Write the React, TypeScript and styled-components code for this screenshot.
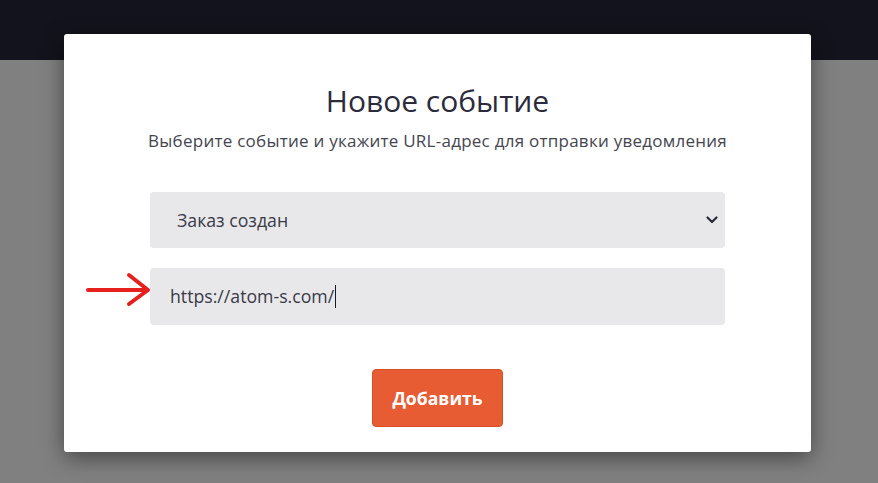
import React from "react";
import styled, { createGlobalStyle } from "styled-components";

const Global = createGlobalStyle`
  html, body { margin: 0; padding: 0; }
  body { font-family: "Open Sans", "Noto Sans", sans-serif; background: #808080; }
  * { box-sizing: border-box; }
`;

const Page = styled.div`
  position: relative;
  width: 878px;
  height: 483px;
  overflow: hidden;
  display: flex;
  flex-direction: column;
  background: #808080;
`;

const TopBar = styled.div`
  height: 60px;
  background: #12131c;
  flex-shrink: 0;
`;

const Overlay = styled.div`
  flex: 1;
  background: #808080;
`;

const Modal = styled.div`
  position: absolute;
  left: 64px;
  top: 34px;
  width: 747px;
  height: 418px;
  background: #ffffff;
  border-radius: 3px;
  box-shadow: 0 6px 22px rgba(0, 0, 0, 0.45);
  display: flex;
  flex-direction: column;
  align-items: center;
  padding-top: 49px;
`;

const Title = styled.h2`
  margin: 0;
  font-size: 30px;
  line-height: 36px;
  font-weight: 400;
  color: #2b2b3c;
`;

const Subtitle = styled.p`
  margin: 11px 0 0;
  font-size: 17px;
  letter-spacing: 0.25px;
  line-height: 22px;
  color: #45454f;
`;

const Form = styled.div`
  margin-top: 40px;
  width: 575px;
  display: flex;
  flex-direction: column;
  gap: 20px;
`;

const Field = styled.div<{ $h: number; $pl: number }>`
  position: relative;
  height: ${(p) => p.$h}px;
  background: #e8e8ea;
  border-radius: 4px;
  display: flex;
  align-items: center;
  padding-left: ${(p) => p.$pl}px;
  padding-right: 7px;
  font-size: 17.7px;
  color: #3a3a48;
`;

const FieldText = styled.span`
  flex: 1;
  white-space: nowrap;
`;

const Caret = styled.span`
  display: inline-block;
  width: 1px;
  height: 23px;
  background: #1a1a22;
  vertical-align: middle;
  margin-left: 1px;
  position: relative;
  top: -1px;
`;

const Chevron = styled.svg`
  width: 12px;
  height: 8px;
  flex-shrink: 0;
`;

const ButtonRow = styled.div`
  margin-top: 44px;
  display: flex;
  justify-content: center;
`;

const AddButton = styled.button`
  width: 131px;
  height: 58px;
  background: #e85c33;
  border: 1px solid #d84f27;
  border-radius: 4px;
  color: #ffffff;
  font-family: "Open Sans", "Noto Sans", sans-serif;
  font-weight: 700;
  font-size: 17.6px;
  cursor: pointer;
`;

const Arrow = styled.svg`
  position: absolute;
  left: 20px;
  top: 236px;
  width: 68px;
  height: 40px;
`;

export default function App() {
  return (
    <>
      <Global />
      <Page>
        <TopBar />
        <Overlay />
        <Modal>
          <Title>Новое событие</Title>
          <Subtitle>Выберите событие и укажите URL-адрес для отправки уведомления</Subtitle>
          <Form>
            <Field $h={56} $pl={27}>
              <FieldText>Заказ создан</FieldText>
              <Chevron viewBox="0 0 12 8">
                <path d="M1.5 1.5 L6 6 L10.5 1.5" fill="none" stroke="#2b2b3c" strokeWidth="2.2" strokeLinecap="round" strokeLinejoin="round" />
              </Chevron>
            </Field>
            <Field $h={57} $pl={20}>
              <FieldText>
                https://atom-s.com/<Caret />
              </FieldText>
            </Field>
          </Form>
          <ButtonRow>
            <AddButton>Добавить</AddButton>
          </ButtonRow>
          <Arrow viewBox="0 0 68 40">
            <path d="M4 20 L63 20" stroke="#e5201d" strokeWidth="4" strokeLinecap="round" fill="none" />
            <path d="M45 5 L64 20 L45 34" stroke="#e5201d" strokeWidth="4" strokeLinecap="round" strokeLinejoin="round" fill="none" />
          </Arrow>
        </Modal>
      </Page>
    </>
  );
}
